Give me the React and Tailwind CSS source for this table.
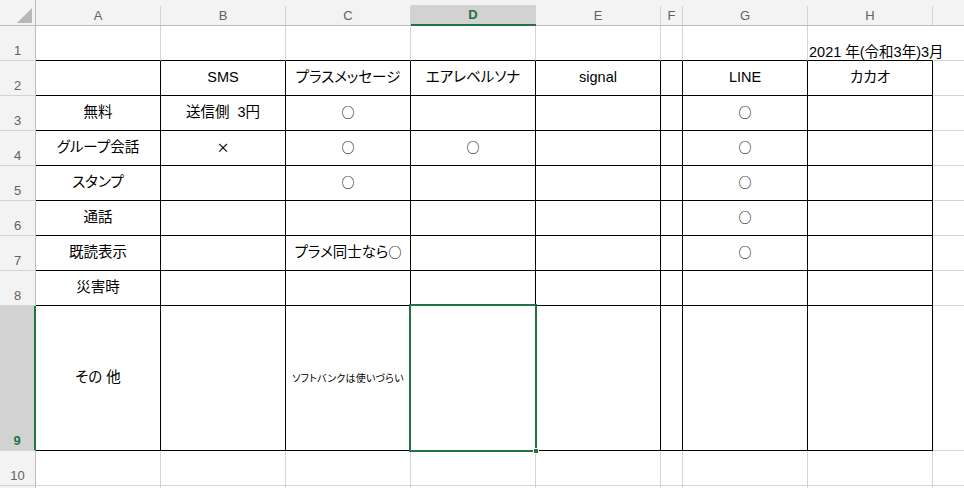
import React from 'react';

const COLS = ['A', 'B', 'C', 'D', 'E', 'F', 'G', 'H'];

// row data: A..H
const ROWS = [
  ['', '', '', '', '', '', '', ''],
  ['', 'SMS', 'プラスメッセージ', 'エアレベルソナ', 'signal', '', 'LINE', 'カカオ'],
  ['無料', '送信側  3円', '○', '', '', '', '○', ''],
  ['グループ会話', '×', '○', '○', '', '', '○', ''],
  ['スタンプ', '', '○', '', '', '', '○', ''],
  ['通話', '', '', '', '', '', '○', ''],
  ['既読表示', '', 'プラメ同士なら○', '', '', '', '○', ''],
  ['災害時', '', '', '', '', '', '', ''],
  ['その 他', '', 'ソフトバンクは使いづらい', '', '', '', '', ''],
  ['', '', '', '', '', '', '', ''],
  ['', '', '', '', '', '', '', ''],
];

const font = "[font-family:'Liberation_Sans','Noto_Sans_CJK_JP',sans-serif]";
const cjk = "[font-family:'Noto_Sans_CJK_JP',sans-serif]";

// marks like ○ and × should come from the CJK font, full width
const renderText = (text) =>
  text.split(/([○×])/).map((part, i) =>
    part === '○' || part === '×' ? (
      <span key={i} className={`${cjk} text-[13px] font-medium`}>
        {part}
      </span>
    ) : (
      part
    )
  );

const Corner = () => (
  <div className="flex flex-col bg-[#f3f3f3] border-r border-b border-[#bdbdbd]">
    <div className="h-[7px]" />
    <div className="flex-1 flex items-end justify-end pr-[3px] pb-[2px]">
      <svg width="15" height="15" viewBox="0 0 15 15">
        <polygon points="15,0 15,15 0,15" fill="#b7b7b7" />
      </svg>
    </div>
  </div>
);

const ColHeader = ({ label }) => {
  const active = label === 'D';
  return (
    <div className={`flex flex-col bg-[#f3f3f3] ${active ? 'border-b-2 border-[#217346]' : 'border-b border-[#bdbdbd]'}`}>
      <div className="h-[7px]" />
      <div
        className={`flex-1 flex items-center justify-center border-r border-[#d4d4d4] text-[13px] ${font} ${
          active ? 'bg-[#d2d2d2] text-[#217346] font-bold' : 'text-[#616161]'
        }`}
      >
        {label}
      </div>
    </div>
  );
};

const RowHeader = ({ n }) => {
  const active = n === 9;
  return (
    <div
      className={`flex items-end justify-center pb-[3px] text-[13px] leading-none border-b border-[#d4d4d4] ${font} ${
        active
          ? 'bg-[#d2d2d2] border-r-2 border-r-[#217346] text-[#217346] font-bold'
          : 'bg-[#f3f3f3] border-r border-r-[#bdbdbd] text-[#616161]'
      }`}
    >
      {n <= 10 ? n : ''}
    </div>
  );
};

const Cell = ({ r, c, text }) => {
  // r: 1-based row, c: 0-based column index A..H
  const inTable = r >= 2 && r <= 9;
  const bottomBlack = r >= 1 && r <= 9;
  const isOverflow = r === 1 && c === 7;
  const isSmall = r === 9 && c === 2;
  const isSelected = r === 9 && c === 3;

  let cls = 'relative flex items-center justify-center text-black';
  cls += inTable ? ' border-r border-r-black' : isOverflow ? ' border-r border-r-transparent' : ' border-r border-r-[#d4d4d4]';
  cls += bottomBlack ? ' border-b border-b-black' : ' border-b border-b-[#d4d4d4]';
  if (isOverflow) cls = cls.replace('items-center justify-center', 'items-end justify-start pb-[1px] pl-[1px]');

  return (
    <div className={cls}>
      {text && (
        <span
          className={`whitespace-pre ${font} [font-feature-settings:'palt'] ${
            isSmall ? 'text-[10px] tracking-[0.2px]' : 'text-[14.5px]'
          } ${isOverflow ? 'leading-none' : ''}`}
        >
          {renderText(text)}
        </span>
      )}
      {isSelected && (
        <>
          <div className="absolute -left-[2px] -top-[2px] w-[128px] h-[148px] border-2 border-[#217346] z-10" />
          <div className="absolute left-[122px] top-[142px] w-[6px] h-[6px] bg-[#217346] border border-white z-20" />
        </>
      )}
    </div>
  );
};

const EdgeCell = () => <div className="border-b border-[#d4d4d4]" />;

export default function App() {
  return (
    <div className="w-[964px] h-[488px] overflow-hidden bg-white">
      <div className="grid grid-cols-[36px_125px_125px_125px_125px_125px_22px_125px_125px_1fr] grid-rows-[26px_35px_35px_35px_35px_35px_35px_35px_35px_145px_35px_35px]">
        <Corner />
        {COLS.map((c) => (
          <ColHeader key={c} label={c} />
        ))}
        <div className="flex flex-col bg-[#f3f3f3] border-b border-[#bdbdbd]" />

        {ROWS.map((row, i) => (
          <React.Fragment key={i}>
            <RowHeader n={i + 1} />
            {row.map((text, c) => (
              <Cell key={c} r={i + 1} c={c} text={i === 0 && c === 7 ? '2021 年(令和3年)3月' : text} />
            ))}
            <EdgeCell />
          </React.Fragment>
        ))}
      </div>
    </div>
  );
}
